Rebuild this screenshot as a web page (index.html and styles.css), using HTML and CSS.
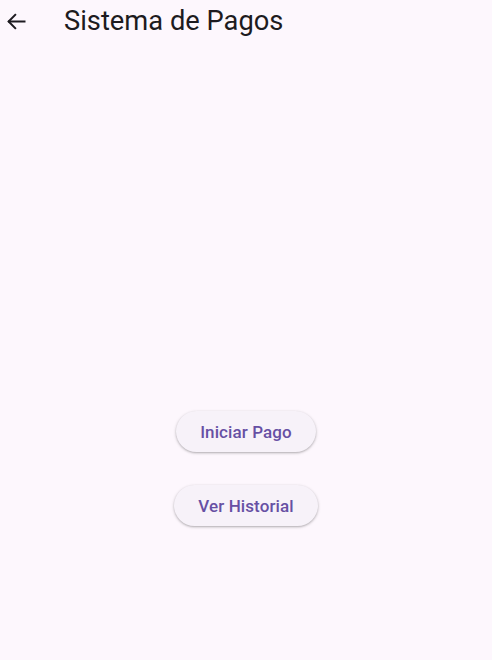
FILE: index.html
```html
<!DOCTYPE html>
<html lang="es">
<head>
<meta charset="utf-8">
<title>Sistema de Pagos</title>
<link rel="stylesheet" href="styles.css">
</head>
<body>
<header class="appbar">
  <button class="back" aria-label="Atrás">
    <svg width="24" height="24" viewBox="0 0 24 24" fill="none" stroke="#1d1b20" stroke-width="2" stroke-linecap="square" stroke-linejoin="miter">
      <path d="M5 13.5H20.5"/>
      <path d="M11.2 6.8L4.6 13.5L11.2 20.2"/>
    </svg>
  </button>
  <h1 class="title">Sistema de Pagos</h1>
</header>
<main class="content">
  <button class="pill">Iniciar Pago</button>
  <button class="pill">Ver Historial</button>
</main>
</body>
</html>
```
FILE: styles.css
```css
html, body {
  margin: 0;
  padding: 0;
}
body {
  width: 492px;
  height: 660px;
  background: #fdf7fd;
  font-family: Roboto, "Noto Sans", sans-serif;
  overflow: hidden;
}
.appbar {
  height: 40px;
  display: flex;
  align-items: center;
}
.back {
  width: 24px;
  height: 24px;
  margin-left: 4px;
  padding: 0;
  border: 0;
  background: none;
  display: flex;
}
.title {
  margin: 2px 0 0 36px;
  font-size: 27.3px;
  line-height: 32px;
  font-weight: 400;
  color: #1d1b20;
}
.content {
  padding-top: 371px;
  display: flex;
  flex-direction: column;
  align-items: center;
  gap: 33px;
}
.pill {
  height: 41px;
  padding: 0 24px;
  border: 0;
  border-radius: 21px;
  background: #f7f2f9;
  color: #6750a4;
  font-family: Roboto, sans-serif;
  font-size: 17px;
  font-weight: 500;
  letter-spacing: 0.1px;
  box-shadow: 0 1px 2px rgba(0,0,0,0.22), 0 1px 3px 1px rgba(0,0,0,0.08);
}
```
